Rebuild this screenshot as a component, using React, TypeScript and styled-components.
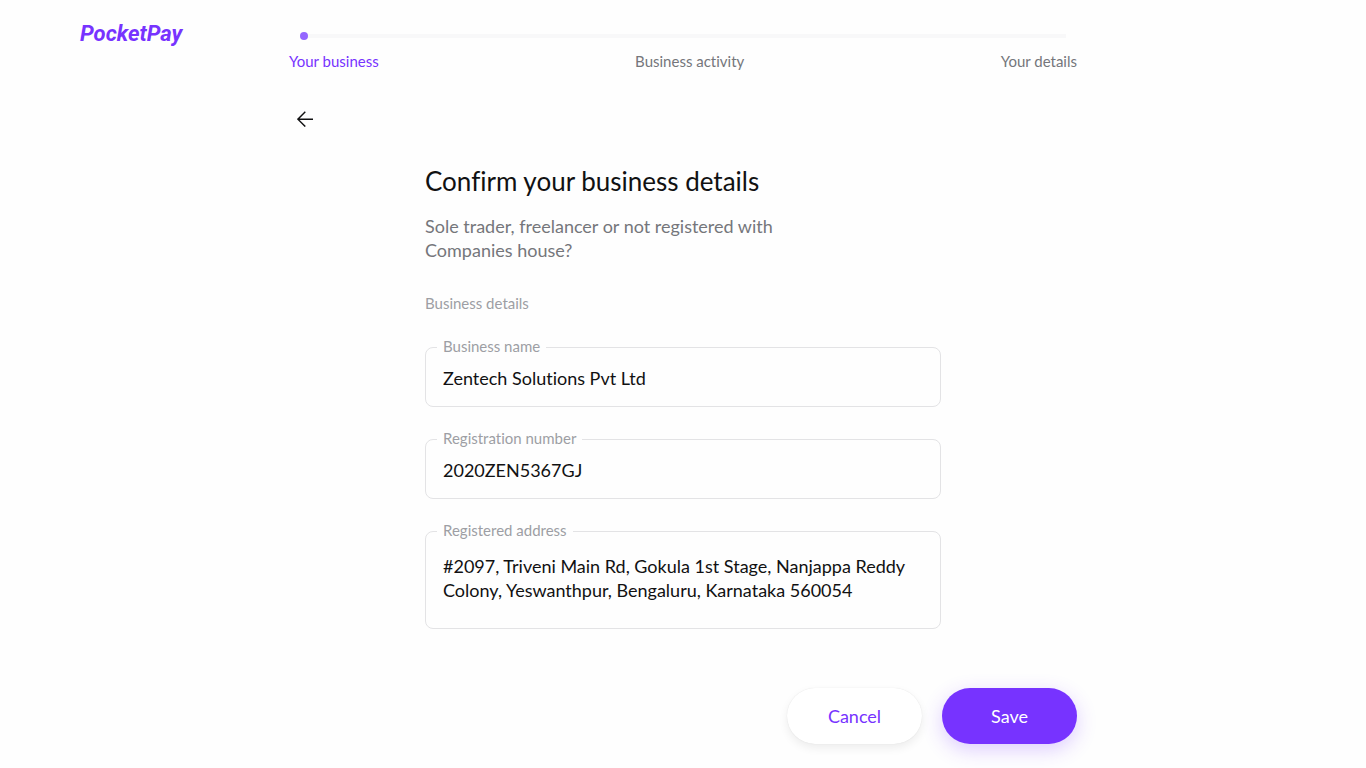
import React from "react";
import styled, { createGlobalStyle } from "styled-components";

const GlobalStyle = createGlobalStyle`
  *, *::before, *::after { box-sizing: border-box; }
  body {
    margin: 0;
    background: #fefefe;
    color: #111112;
    font-family: Lato, "Open Sans", sans-serif;
    font-size: 18px;
    font-variant-ligatures: none;
    line-height: 24px;
  }
  h1, h2, p, ol { margin: 0; padding: 0; font-weight: 400; }
`;

const Header = styled.header`
  display: grid;
  grid-template-columns: 1fr minmax(0, 788px) 1fr;
  padding-top: 20px;
`;

const Logo = styled.a`
  justify-self: start;
  padding-left: 80px;
  color: #7733ff;
  font-family: "Liberation Sans Narrow", Roboto, sans-serif;
  font-size: 22px;
  font-weight: 700;
  font-style: italic;
  line-height: 28px;
  text-decoration: none;
`;

const Progress = styled.nav`
  padding-top: 12px;
`;

const Track = styled.div`
  display: flex;
  align-items: center;
  margin: 0 11px;
`;

const Dot = styled.span`
  width: 8px;
  height: 8px;
  border-radius: 50%;
  background: #9466ff;
`;

const Line = styled.span`
  flex: 1;
  height: 4px;
  background: #f8f8f9;
`;

const Steps = styled.ol`
  display: flex;
  justify-content: space-between;
  margin-top: 11px;
  list-style: none;
`;

const Step = styled.li<{ $active?: boolean }>`
  color: ${(p) => (p.$active ? "#7733ff" : "#75767b")};
  font-size: 15px;
  line-height: 20px;
`;

const Main = styled.main`
  max-width: 788px;
  margin: 0 auto;
  padding: 32px 0 24px;
`;

const BackButton = styled.button`
  display: flex;
  align-items: center;
  justify-content: center;
  width: 32px;
  height: 32px;
  padding: 0;
  border: 0;
  background: none;
  color: #111112;
  cursor: pointer;
`;

const Content = styled.div`
  max-width: 516px;
  margin: 30px auto 0;
`;

const Title = styled.h1`
  font-size: 26px;
  line-height: 32px;
`;

const Intro = styled.p`
  max-width: 360px;
  margin-top: 17px;
  color: #75767b;
`;

const SectionTitle = styled.h2`
  margin-top: 31px;
  color: #9d9ea4;
  font-size: 15px;
  line-height: 20px;
`;

const Fields = styled.div`
  display: grid;
  gap: 32px;
  margin-top: 34px;
`;

const Field = styled.div`
  position: relative;
  display: flex;
`;

const Label = styled.label`
  position: absolute;
  top: -11px;
  left: 12px;
  padding: 0 6px;
  background: #fefefe;
  color: #9d9ea4;
  font-size: 15px;
  line-height: 20px;
`;

const Input = styled.input`
  width: 100%;
  height: 60px;
  padding: 2px 17px 0;
  border: 1px solid #e3e3e5;
  border-radius: 8px;
  outline: none;
  background: transparent;
  color: #111112;
  font: inherit;
`;

const TextArea = styled(Input).attrs({ as: "textarea" })`
  height: 98px;
  padding: 22px 17px;
  resize: none;
  overflow: hidden;
`;

const Actions = styled.div`
  display: flex;
  justify-content: flex-end;
  gap: 20px;
  margin-top: 59px;
`;

const Button = styled.button<{ $primary?: boolean }>`
  width: 135px;
  height: 56px;
  padding: 0;
  border: 0;
  border-radius: 28px;
  background: ${(p) => (p.$primary ? "#7733ff" : "#ffffff")};
  box-shadow: ${(p) =>
    p.$primary
      ? "0 6px 20px rgba(119, 51, 255, 0.24)"
      : "0 4px 10px rgba(0, 0, 0, 0.07), 0 0 1px rgba(0, 0, 0, 0.12)"};
  color: ${(p) => (p.$primary ? "#ffffff" : "#7733ff")};
  font: inherit;
  cursor: pointer;
`;

export default function App() {
  return (
    <>
      <GlobalStyle />
      <Header>
        <Logo href="#">PocketPay</Logo>
        <Progress aria-label="Progress">
          <Track>
            <Dot />
            <Line />
          </Track>
          <Steps>
            <Step $active aria-current="step">Your business</Step>
            <Step>Business activity</Step>
            <Step>Your details</Step>
          </Steps>
        </Progress>
      </Header>
      <Main>
        <BackButton type="button" aria-label="Back">
          <svg width="16" height="16" viewBox="0 0 16 16" fill="none" stroke="currentColor" strokeWidth="1.4">
            <path d="M16 8.2H1M8.3 0.8L0.9 8.2l7.4 7.4" />
          </svg>
        </BackButton>
        <form onSubmit={(e) => e.preventDefault()}>
          <Content>
            <Title>Confirm your business details</Title>
            <Intro>Sole trader, freelancer or not registered with Companies house?</Intro>
            <SectionTitle>Business details</SectionTitle>
            <Fields>
              <Field>
                <Input id="name" defaultValue="Zentech Solutions Pvt Ltd" />
                <Label htmlFor="name">Business name</Label>
              </Field>
              <Field>
                <Input id="number" defaultValue="2020ZEN5367GJ" />
                <Label htmlFor="number">Registration number</Label>
              </Field>
              <Field>
                <TextArea
                  id="address"
                  defaultValue="#2097, Triveni Main Rd, Gokula 1st Stage, Nanjappa Reddy Colony, Yeswanthpur, Bengaluru, Karnataka 560054"
                />
                <Label htmlFor="address">Registered address</Label>
              </Field>
            </Fields>
          </Content>
          <Actions>
            <Button type="button">Cancel</Button>
            <Button type="submit" $primary>Save</Button>
          </Actions>
        </form>
      </Main>
    </>
  );
}
